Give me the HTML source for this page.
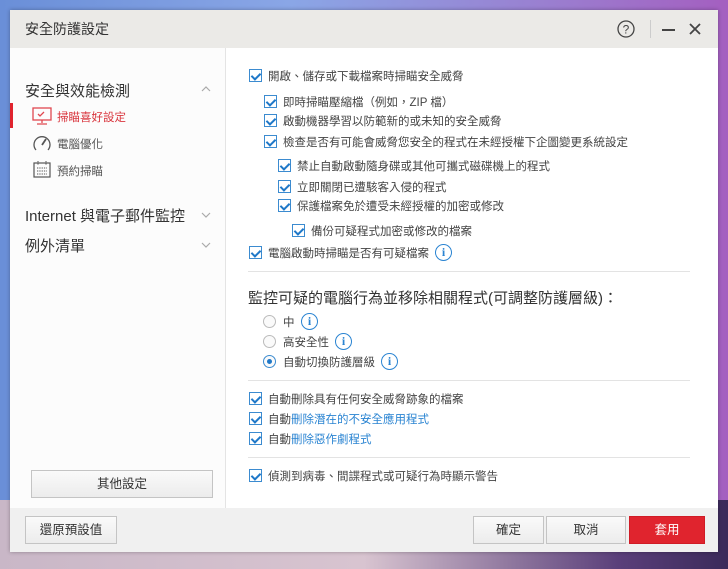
<!DOCTYPE html>
<html><head><meta charset="utf-8"><style>
*{margin:0;padding:0;box-sizing:border-box}
body{width:728px;height:569px;overflow:hidden;position:relative;font-family:"Liberation Sans","Noto Sans CJK TC",sans-serif;color:#333;
background:linear-gradient(90deg,#6a8fd8 0%,#8aa6e6 40%,#9a7fd0 75%,#a45fc0 100%)}
.bg2{position:absolute;left:0;top:500px;width:728px;height:69px;background:linear-gradient(90deg,#c9b7c7,#d8c4d0 50%,#5a3f7a 85%,#3b2a5a)}
.win{position:absolute;left:10px;top:10px;width:708px;height:542px;background:#fff;box-shadow:0 0 4px rgba(0,0,0,.3)}
.title{position:absolute;left:0;top:0;width:708px;height:38px;background:#ebeae7;font-size:14px;line-height:38px;padding-left:15px;color:#333}
.left{position:absolute;left:0;top:38px;width:216px;height:460px;background:#fcfcfc;border-right:1px solid #e4e4e4}
.foot{position:absolute;left:0;top:498px;width:708px;height:44px;background:#f0f0f0}
.t{position:absolute;font-size:11.5px;white-space:nowrap;color:#444}
.cb{position:absolute;width:13px;height:13px;border:1px solid #3b8bd0;background:#fff}
.cb:after{content:"";position:absolute;left:3px;top:1px;width:4px;height:7px;border:solid #1f78c8;border-width:0 2px 2px 0;transform:rotate(45deg)}
.rd{position:absolute;width:13px;height:13px;border:1px solid #bbb;border-radius:50%;background:#fafafa}
.rd.on{border-color:#3b8bd0}.rd.on:after{content:"";position:absolute;left:3px;top:3px;width:5px;height:5px;border-radius:50%;background:#1f78c8}
.info{position:absolute;width:17px;height:17px;border:1.5px solid #2a84d2;border-radius:50%;color:#2a84d2;font:bold 12px/14px "Liberation Serif",serif;text-align:center}
.hr{position:absolute;left:238px;width:442px;height:1px;background:#e3e3e3}
.btn{position:absolute;border:1px solid #c4c4c4;background:linear-gradient(#fafafa,#ececec);font-size:12.5px;text-align:center;color:#333}
.blue{color:#2a84d2}
</style></head><body>
<div class="bg2"></div>
<div class="win">
<div class="title">安全防護設定
<svg style="position:absolute;left:607px;top:10px" width="18" height="18"><circle cx="9" cy="9" r="8" fill="none" stroke="#444" stroke-width="1.3"/><text x="9" y="13.5" font-size="12" text-anchor="middle" fill="#444" font-family="Liberation Sans">?</text></svg>
<div style="position:absolute;left:640px;top:10px;width:1px;height:18px;background:#ccc"></div>
<div style="position:absolute;left:652px;top:19px;width:13px;height:2px;background:#444"></div>
<svg style="position:absolute;left:679px;top:13px" width="12" height="12"><path d="M1 1L11 11M11 1L1 11" stroke="#444" stroke-width="1.8"/></svg>
</div>
<div class="left">
<div class="t" style="left:15px;top:32px;font-size:15px;color:#333">安全與效能檢測</div>
<svg style="position:absolute;left:191px;top:37px" width="10" height="7"><path d="M1 6L5 2L9 6" fill="none" stroke="#aaa" stroke-width="1.2"/></svg>
<div style="position:absolute;left:0;top:55px;width:3px;height:25px;background:#e0242e"></div>
<svg style="position:absolute;left:22px;top:59px" width="20" height="18"><rect x="1" y="1" width="18" height="12" fill="none" stroke="#e04850" stroke-width="1.3"/><path d="M6 7l2 2 4-4M10 13v3M5 17h10" fill="none" stroke="#e04850" stroke-width="1.3"/></svg>
<div class="t" style="left:47px;top:61px;color:#d9363e">掃瞄喜好設定</div>
<svg style="position:absolute;left:22px;top:86px" width="20" height="18"><path d="M4 16A8 8 0 1 1 16 16" fill="none" stroke="#555" stroke-width="1.3"/><path d="M10 11L14 5" stroke="#555" stroke-width="1.8"/></svg>
<div class="t" style="left:47px;top:88px;color:#555">電腦優化</div>
<svg style="position:absolute;left:23px;top:112px" width="18" height="18"><rect x="1" y="3" width="16" height="14" fill="none" stroke="#555" stroke-width="1.2"/><path d="M5 1v4M13 1v4M4 8h10M4 11h10M4 14h10" stroke="#555" stroke-width="1" stroke-dasharray="1.3 1"/></svg>
<div class="t" style="left:47px;top:115px;color:#555">預約掃瞄</div>
<div class="t" style="left:15px;top:157px;font-size:15px;color:#333">Internet 與電子郵件監控</div>
<svg style="position:absolute;left:191px;top:164px" width="10" height="7"><path d="M1 1L5 5L9 1" fill="none" stroke="#aaa" stroke-width="1.2"/></svg>
<div class="t" style="left:15px;top:187px;font-size:15px;color:#333">例外清單</div>
<svg style="position:absolute;left:191px;top:194px" width="10" height="7"><path d="M1 1L5 5L9 1" fill="none" stroke="#aaa" stroke-width="1.2"/></svg>
<div class="btn" style="left:21px;top:422px;width:182px;height:28px;line-height:26px">其他設定</div>
</div>
<div class="foot">
<div class="btn" style="left:15px;top:8px;width:92px;height:28px;line-height:26px">還原預設值</div>
<div class="btn" style="left:463px;top:8px;width:71px;height:28px;line-height:26px">確定</div>
<div class="btn" style="left:536px;top:8px;width:80px;height:28px;line-height:26px">取消</div>
<div class="btn" style="left:619px;top:8px;width:76px;height:28px;line-height:26px;background:#e0242e;border-color:#d01c26;color:#fff">套用</div>
</div>
</div>
<div class="cb" style="left:249px;top:69px"></div><div class="t" style="left:268px;top:68px">開啟、儲存或下載檔案時掃瞄安全威脅</div>
<div class="cb" style="left:264px;top:95px"></div><div class="t" style="left:283px;top:94px">即時掃瞄壓縮檔（例如，ZIP 檔）</div>
<div class="cb" style="left:264px;top:114px"></div><div class="t" style="left:283px;top:113px">啟動機器學習以防範新的或未知的安全威脅</div>
<div class="cb" style="left:264px;top:135px"></div><div class="t" style="left:283px;top:134px">檢查是否有可能會威脅您安全的程式在未經授權下企圖變更系統設定</div>
<div class="cb" style="left:278px;top:159px"></div><div class="t" style="left:297px;top:158px">禁止自動啟動隨身碟或其他可攜式磁碟機上的程式</div>
<div class="cb" style="left:278px;top:180px"></div><div class="t" style="left:297px;top:179px">立即關閉已遭駭客入侵的程式</div>
<div class="cb" style="left:278px;top:199px"></div><div class="t" style="left:297px;top:198px">保護檔案免於遭受未經授權的加密或修改</div>
<div class="cb" style="left:292px;top:224px"></div><div class="t" style="left:311px;top:223px">備份可疑程式加密或修改的檔案</div>
<div class="cb" style="left:249px;top:246px"></div><div class="t" style="left:268px;top:245px">電腦啟動時掃瞄是否有可疑檔案</div><div class="info" style="left:435px;top:244px">i</div>
<div class="hr" style="top:271px;left:248px"></div>
<div class="t" style="left:248px;top:287px;font-size:15px;color:#333">監控可疑的電腦行為並移除相關程式(可調整防護層級)：</div>
<div class="rd" style="left:263px;top:315px"></div><div class="t" style="left:283px;top:314px">中</div><div class="info" style="left:301px;top:313px">i</div>
<div class="rd" style="left:263px;top:335px"></div><div class="t" style="left:283px;top:334px">高安全性</div><div class="info" style="left:335px;top:333px">i</div>
<div class="rd on" style="left:263px;top:355px"></div><div class="t" style="left:283px;top:354px">自動切換防護層級</div><div class="info" style="left:381px;top:353px">i</div>
<div class="hr" style="top:380px;left:248px"></div>
<div class="cb" style="left:249px;top:392px"></div><div class="t" style="left:268px;top:391px">自動刪除具有任何安全威脅跡象的檔案</div>
<div class="cb" style="left:249px;top:412px"></div><div class="t" style="left:268px;top:411px">自動<span class="blue">刪除潛在的不安全應用程式</span></div>
<div class="cb" style="left:249px;top:432px"></div><div class="t" style="left:268px;top:431px">自動<span class="blue">刪除惡作劇程式</span></div>
<div class="hr" style="top:457px;left:248px"></div>
<div class="cb" style="left:249px;top:469px"></div><div class="t" style="left:268px;top:468px">偵測到病毒、間諜程式或可疑行為時顯示警告</div>
</body></html>
